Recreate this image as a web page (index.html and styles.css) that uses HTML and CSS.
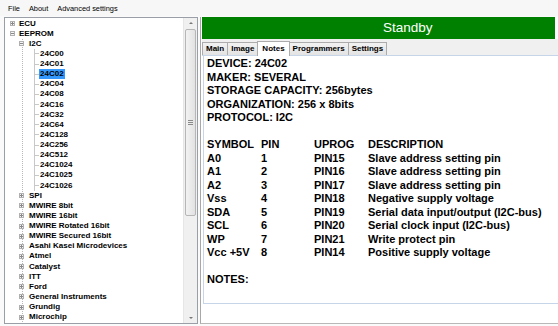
FILE: index.html
```html
<!DOCTYPE html>
<html lang="en">
<head>
  <meta charset="UTF-8" />
  <title>EEPROM Programmer</title>
  <link rel="stylesheet" href="styles.css">
</head>
<body>
  <div class="menubar">
    <span>File</span>
    <span>About</span>
    <span>Advanced settings</span>
  </div>

  <div class="main">
    <div class="treebox">
      <div class="tree">
        <div class="row"><i class="box plus"></i>ECU</div>
        <div class="row"><i class="box minus"></i>EEPROM</div>
        <div class="kids">
          <div class="row"><i class="box minus"></i>I2C</div>
          <div class="kids leaves">
            <div class="row leaf"><span>24C00</span></div>
            <div class="row leaf"><span>24C01</span></div>
            <div class="row leaf"><span class="sel">24C02</span></div>
            <div class="row leaf"><span>24C04</span></div>
            <div class="row leaf"><span>24C08</span></div>
            <div class="row leaf"><span>24C16</span></div>
            <div class="row leaf"><span>24C32</span></div>
            <div class="row leaf"><span>24C64</span></div>
            <div class="row leaf"><span>24C128</span></div>
            <div class="row leaf"><span>24C256</span></div>
            <div class="row leaf"><span>24C512</span></div>
            <div class="row leaf"><span>24C1024</span></div>
            <div class="row leaf"><span>24C1025</span></div>
            <div class="row leaf"><span>24C1026</span></div>
          </div>
          <div class="row"><i class="box plus"></i>SPI</div>
          <div class="row"><i class="box plus"></i>MWIRE 8bit</div>
          <div class="row"><i class="box plus"></i>MWIRE 16bit</div>
          <div class="row"><i class="box plus"></i>MWIRE Rotated 16bit</div>
          <div class="row"><i class="box plus"></i>MWIRE Secured 16bit</div>
          <div class="row"><i class="box plus"></i>Asahi Kasei Microdevices</div>
          <div class="row"><i class="box plus"></i>Atmel</div>
          <div class="row"><i class="box plus"></i>Catalyst</div>
          <div class="row"><i class="box plus"></i>ITT</div>
          <div class="row"><i class="box plus"></i>Ford</div>
          <div class="row"><i class="box plus"></i>General Instruments</div>
          <div class="row"><i class="box plus"></i>Grundig</div>
          <div class="row"><i class="box plus"></i>Microchip</div>
        </div>
      </div>
      <div class="scrollbar">
        <div class="arrow up"></div>
        <div class="track">
          <div class="thumb"><div class="grip"></div></div>
        </div>
        <div class="arrow down"></div>
      </div>
    </div>

    <div class="right">
      <div class="status">Standby</div>
      <div class="tabs">
        <div class="tab">Main</div>
        <div class="tab">Image</div>
        <div class="tab active">Notes</div>
        <div class="tab">Programmers</div>
        <div class="tab">Settings</div>
      </div>
      <div class="page">
        <div class="line">DEVICE: 24C02</div>
        <div class="line">MAKER: SEVERAL</div>
        <div class="line">STORAGE CAPACITY: 256bytes</div>
        <div class="line">ORGANIZATION: 256 x 8bits</div>
        <div class="line">PROTOCOL: I2C</div>
        <div class="line"></div>
        <div class="pins">
          <span>SYMBOL</span><span>PIN</span><span>UPROG</span><span>DESCRIPTION</span>
          <span>A0</span><span>1</span><span>PIN15</span><span>Slave address setting pin</span>
          <span>A1</span><span>2</span><span>PIN16</span><span>Slave address setting pin</span>
          <span>A2</span><span>3</span><span>PIN17</span><span>Slave address setting pin</span>
          <span>Vss</span><span>4</span><span>PIN18</span><span>Negative supply voltage</span>
          <span>SDA</span><span>5</span><span>PIN19</span><span>Serial data input/output (I2C-bus)</span>
          <span>SCL</span><span>6</span><span>PIN20</span><span>Serial clock input (I2C-bus)</span>
          <span>WP</span><span>7</span><span>PIN21</span><span>Write protect pin</span>
          <span>Vcc +5V</span><span>8</span><span>PIN14</span><span>Positive supply voltage</span>
        </div>
        <div class="line"></div>
        <div class="line">NOTES:</div>
      </div>
    </div>
  </div>
</body>
</html>
```

FILE: styles.css
```css
body {
  margin: 0;
  width: 558px;
  height: 326px;
  background: #fafafa;
  font-family: "Liberation Sans", Arial, sans-serif;
  color: #000;
  overflow: hidden;
}
.menubar {
  height: 16px;
  display: flex;
  align-items: center;
  gap: 9px;
  padding-left: 8px;
  background: #f7f7f7;
  font-size: 7.4px;
}
.main {
  display: flex;
  height: 307px;
  padding: 1px 0 0 4px;
}
.treebox {
  width: 192px;
  border: 1px solid #9a9ea6;
  background: #fff;
  display: flex;
  overflow: hidden;
}
.tree {
  flex: 1;
  padding-top: 0.5px;
  font-size: 8px;
  font-weight: bold;
}
.row {
  height: 10.14px;
  line-height: 10.14px;
  display: flex;
  align-items: center;
  padding-left: 5px;
  white-space: nowrap;
}
.box {
  width: 3px;
  height: 3px;
  border: 1px solid #b0b0b0;
  margin-right: 4px;
  background: linear-gradient(#888, #888) center / 3px 1px no-repeat, #f4f4f4;
}
.box.plus {
  background: linear-gradient(#888, #888) center / 3px 1px no-repeat,
              linear-gradient(#888, #888) center / 1px 3px no-repeat, #f4f4f4;
}
.kids {
  margin-left: 17px;
  border-left: 1px dotted #b8b8b8;
}
.kids .row {
  padding-left: 0;
}
.kids .box {
  margin-left: -4px;
  margin-right: 5px;
}
.kids.leaves {
  margin-left: 11px;
  border-left: 1px solid #c8c8c8;
}
.leaf::before {
  content: "";
  width: 4px;
  height: 1px;
  background: #c8c8c8;
  margin-right: 0;
}
.leaf span {
  padding: 0 1px;
}
.leaf .sel {
  background: #3399ff;
}
.scrollbar {
  width: 13px;
  display: flex;
  flex-direction: column;
  background: #f0f0f0;
  border-left: 1px solid #e6e6e6;
}
.arrow {
  height: 11px;
  position: relative;
}
.arrow::after {
  content: "";
  position: absolute;
  left: 5px;
  border-left: 2px solid transparent;
  border-right: 2px solid transparent;
}
.arrow.up::after {
  top: 4px;
  border-bottom: 2px solid #777;
}
.arrow.down::after {
  top: 5px;
  border-top: 2px solid #777;
}
.track {
  flex: 1;
  padding: 0 1px;
}
.thumb {
  height: 185px;
  border: 1px solid #b6b6b6;
  border-radius: 2px;
  background: linear-gradient(to right, #f2f2f2, #e2e2e2);
  display: flex;
  align-items: center;
  justify-content: center;
}
.grip {
  width: 5px;
  height: 5px;
  background: repeating-linear-gradient(#8a8a8a 0 1px, transparent 1px 2px);
}
.right {
  flex: 1;
  margin-left: 2px;
  border-left: 1px solid #a8a8a8;
  border-bottom: 1px solid #b8b8b8;
  display: flex;
  flex-direction: column;
  padding-left: 1px;
  background: #fff;
}
.status {
  height: 22px;
  margin-right: 3px;
  background: #008000;
  color: #fff;
  font-size: 13.5px;
  line-height: 22px;
  padding-left: 181px;
}
.tabs {
  height: 16px;
  display: flex;
  align-items: flex-end;
  background: #f0f0f0;
  padding-left: 1px;
  border-bottom: 1px solid #c6d6e8;
  font-size: 8px;
  font-weight: bold;
}
.tab {
  height: 12px;
  line-height: 12px;
  padding: 0 3px;
  border: 1px solid #acacac;
  border-bottom: none;
  background: linear-gradient(#f2f2f2, #e3e3e3);
  margin-left: -1px;
}
.tab.active {
  height: 14px;
  line-height: 13px;
  background: #fff;
  position: relative;
  margin-bottom: -1px;
  padding: 0 4px;
}
.page {
  height: 246px;
  margin-left: 1px;
  border-left: 1px solid #c6d6e8;
  border-bottom: 1px solid #c6d6e8;
  padding: 1px 0 0 3px;
  font-size: 11px;
  font-weight: bold;
  line-height: 13.5px;
}
.line {
  height: 13.5px;
}
.pins {
  display: grid;
  grid-template-columns: 54px 53px 54px auto;
}
```
